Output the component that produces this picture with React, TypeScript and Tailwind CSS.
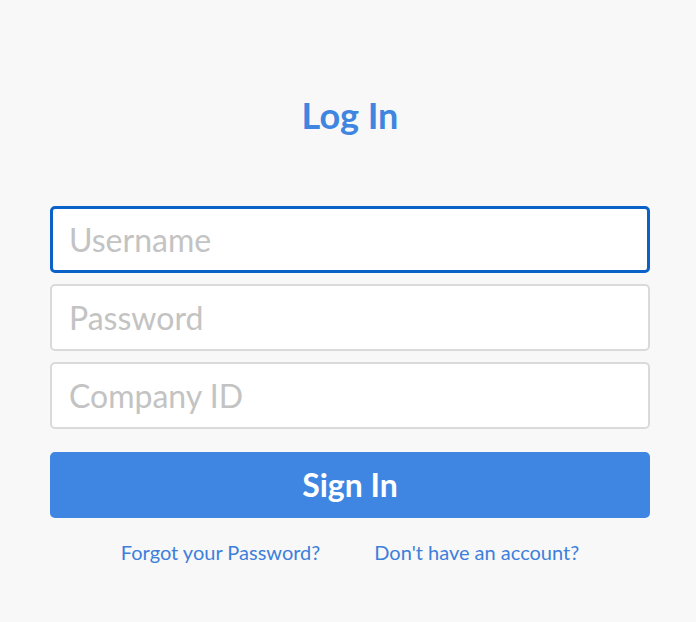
export default function App() {
    const fields = ['Username', 'Password', 'Company ID'];

    return (
        <main className="min-h-[622px] w-full bg-[#f8f8f8] font-['Lato',sans-serif]">
            <div className="ml-[50px] w-[600px] flex flex-col pt-[91px]">
                <h1 className="text-center text-[36px] leading-[48px] font-bold text-[#3f86e0]">Log In</h1>

                <form className="flex flex-col mt-[67px]" onSubmit={(e) => e.preventDefault()}>
                    {fields.map((f, i) => (
                        <input
                            key={f}
                            type={f === 'Password' ? 'password' : 'text'}
                            placeholder={f}
                            className={
                                i === 0
                                    ? 'h-[67px] w-full rounded-[5px] border-[3px] border-[#0a62c9] bg-white px-[16px] text-[32px] text-[#333] placeholder:text-[#c3c3c3] outline-none'
                                    : 'h-[67px] w-full mt-[11px] rounded-[5px] border-2 border-[#dadada] bg-white px-[17px] text-[32px] text-[#333] placeholder:text-[#c3c3c3] outline-none'
                            }
                        />
                    ))}

                    <button
                        type="submit"
                        className="mt-[23px] h-[66px] w-full rounded-[5px] bg-[#3f86e2] text-white text-[32px] font-bold"
                    >
                        Sign In
                    </button>
                </form>

                <div className="flex justify-center gap-[54px] mt-[20px] text-[20px] leading-[28px] text-[#3d7fdc]">
                    <a href="#">Forgot your Password?</a>
                    <a href="#">Don't have an account?</a>
                </div>
            </div>
        </main>
    )
}
